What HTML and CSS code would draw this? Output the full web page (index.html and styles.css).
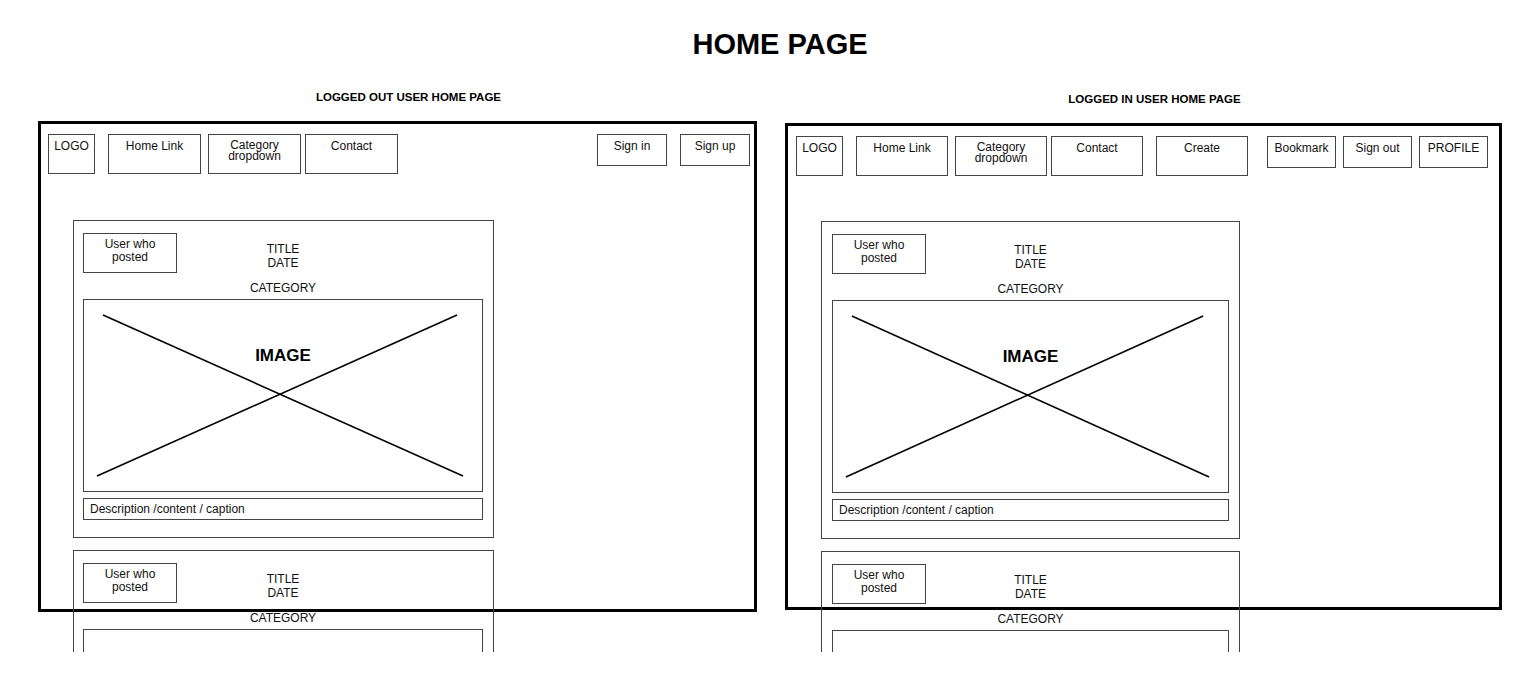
FILE: index.html
```html
<!DOCTYPE html>
<html lang="en">

<head>
    <meta charset="UTF-8">
    <meta name="viewport" content="width=device-width, initial-scale=1.0">
    <title>Home Page Wireframe</title>
    <link rel="stylesheet" href="styles.css">
</head>

<body>
    <div class="page">
        <h1 class="page-title">HOME PAGE</h1>

        <div class="boards">
            <!-- logged out -->
            <section class="mock mock-out">
                <h2 class="mock-title">LOGGED OUT USER HOME PAGE</h2>
                <div class="frame">
                    <nav class="nav">
                        <div class="nav-box logo">LOGO</div>
                        <div class="nav-box link gap-l">Home Link</div>
                        <div class="nav-box link gap-m tight">Category<br>dropdown</div>
                        <div class="nav-box link gap-s">Contact</div>
                        <div class="nav-box btn push">Sign in</div>
                        <div class="nav-box btn gap-l">Sign up</div>
                    </nav>

                    <article class="card">
                        <div class="card-head">
                            <div class="poster">User who<br>posted</div>
                            <div class="post-meta">TITLE<br>DATE</div>
                        </div>
                        <div class="post-category">CATEGORY</div>
                        <div class="post-image">
                            <svg viewBox="0 0 398 191" preserveAspectRatio="none">
                                <line x1="19" y1="15" x2="379" y2="176" />
                                <line x1="373" y1="15" x2="13" y2="176" />
                            </svg>
                            <span class="image-label">IMAGE</span>
                        </div>
                        <div class="post-caption">Description /content / caption</div>
                    </article>

                    <article class="card">
                        <div class="card-head">
                            <div class="poster">User who<br>posted</div>
                            <div class="post-meta">TITLE<br>DATE</div>
                        </div>
                        <div class="post-category">CATEGORY</div>
                        <div class="post-image"></div>
                    </article>
                </div>
            </section>

            <!-- logged in -->
            <section class="mock mock-in">
                <h2 class="mock-title">LOGGED IN USER HOME PAGE</h2>
                <div class="frame">
                    <nav class="nav">
                        <div class="nav-box logo">LOGO</div>
                        <div class="nav-box link gap-l">Home Link</div>
                        <div class="nav-box link gap-m tight">Category<br>dropdown</div>
                        <div class="nav-box link gap-s">Contact</div>
                        <div class="nav-box link gap-l">Create</div>
                        <div class="nav-box btn push">Bookmark</div>
                        <div class="nav-box btn gap-m">Sign out</div>
                        <div class="nav-box btn gap-m">PROFILE</div>
                    </nav>

                    <article class="card">
                        <div class="card-head">
                            <div class="poster">User who<br>posted</div>
                            <div class="post-meta">TITLE<br>DATE</div>
                        </div>
                        <div class="post-category">CATEGORY</div>
                        <div class="post-image">
                            <svg viewBox="0 0 398 191" preserveAspectRatio="none">
                                <line x1="19" y1="15" x2="379" y2="176" />
                                <line x1="373" y1="15" x2="13" y2="176" />
                            </svg>
                            <span class="image-label">IMAGE</span>
                        </div>
                        <div class="post-caption">Description /content / caption</div>
                    </article>

                    <article class="card">
                        <div class="card-head">
                            <div class="poster">User who<br>posted</div>
                            <div class="post-meta">TITLE<br>DATE</div>
                        </div>
                        <div class="post-category">CATEGORY</div>
                        <div class="post-image"></div>
                    </article>
                </div>
            </section>
        </div>
    </div>
</body>

</html>
```

FILE: styles.css
```css
* {
    box-sizing: border-box;
}

body {
    font-family: "Liberation Sans", Arial, sans-serif;
    background-color: #fff;
    color: #111;
    margin: 0;
    padding: 0;
}

.page {
    height: 652px;
    overflow: hidden;
    padding-top: 30px;
}

.page-title {
    margin: 0 0 31px;
    padding-left: 32px;
    font-size: 29px;
    line-height: 29px;
    font-weight: 700;
    text-align: center;
    color: #000;
}

.boards {
    display: flex;
    gap: 28px;
    padding-left: 38px;
}

.mock {
    flex-shrink: 0;
    width: 719px;
}

.mock-in {
    width: 717px;
    margin-top: 2px;
}

.mock-title {
    margin: 0 0 17px;
    padding-left: 22px;
    font-size: 11.5px;
    line-height: 14px;
    font-weight: 700;
    text-align: center;
    color: #000;
}

/* the browser window outline */
.frame {
    height: 491px;
    border: 3px solid #000;
    padding: 10px 4px 0 7px;
}

.mock-in .frame {
    height: 487px;
    padding: 10px 11px 0 8px;
}

.nav {
    display: flex;
    align-items: flex-start;
}

.nav-box {
    height: 40px;
    border: 1px solid #444;
    padding-top: 5px;
    font-size: 12px;
    line-height: 13px;
    text-align: center;
}

.nav-box.tight {
    line-height: 11px;
}

.logo {
    width: 47px;
}

.link {
    width: 93px;
}

.btn {
    width: 70px;
    height: 32px;
}

.mock-in .link {
    width: 92px;
}

.mock-in .btn {
    width: 69px;
}

.gap-s {
    margin-left: 4px;
}

.gap-m {
    margin-left: 7px;
}

.gap-l {
    margin-left: 13px;
}

.push {
    margin-left: auto;
}

/* post cards */
.card {
    width: 421px;
    margin: 46px 0 0 25px;
    border: 1px solid #444;
    padding: 12px 10px 17px 9px;
}

.card + .card {
    margin-top: 12px;
}

.mock-in .card {
    width: 419px;
    margin-top: 45px;
    padding: 12px 10px 17px 10px;
}

.mock-in .card + .card {
    margin-top: 12px;
}

.card-head {
    display: grid;
    grid-template-columns: 1fr auto 1fr;
    align-items: start;
}

.poster {
    width: 94px;
    height: 40px;
    border: 1px solid #444;
    padding-top: 4px;
    font-size: 12px;
    line-height: 12.5px;
    text-align: center;
}

.post-meta {
    margin-top: 10px;
    font-size: 12px;
    line-height: 13.5px;
    text-align: center;
}

.post-category {
    margin: 9px 0 4px;
    font-size: 12px;
    line-height: 13px;
    text-align: center;
}

.post-image {
    display: grid;
    height: 193px;
    border: 1px solid #444;
}

.post-image svg {
    grid-area: 1 / 1;
    display: block;
    width: 100%;
    height: 191px;
}

.post-image line {
    stroke: #000;
    stroke-width: 1.6;
}

.image-label {
    grid-area: 1 / 1;
    justify-self: center;
    align-self: start;
    margin-top: 47px;
    font-size: 17px;
    line-height: 17px;
    font-weight: 700;
    color: #000;
}

.post-caption {
    height: 22px;
    margin-top: 6px;
    border: 1px solid #444;
    padding-left: 6px;
    font-size: 12px;
    line-height: 20px;
}
```
